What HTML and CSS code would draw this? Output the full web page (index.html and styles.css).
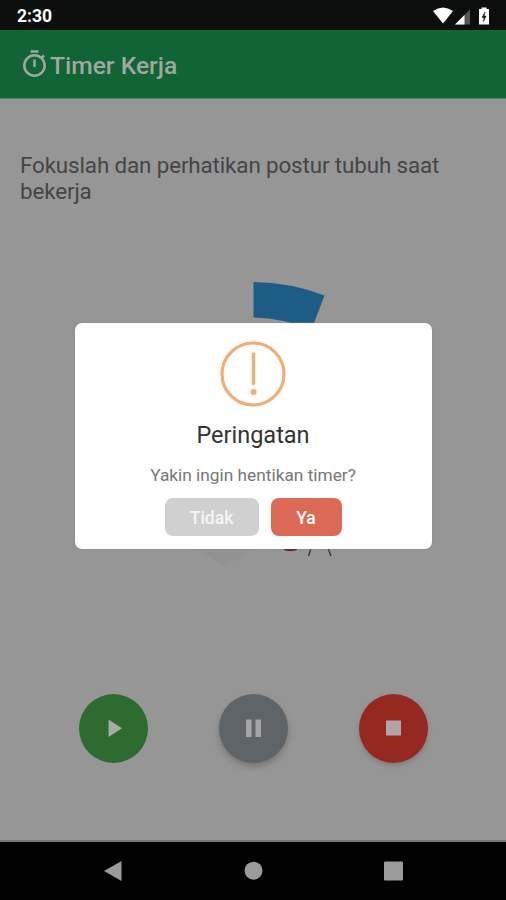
FILE: index.html
```html
<!DOCTYPE html>
<html lang="id">
<head>
<meta charset="utf-8">
<title>Timer Kerja</title>
<link rel="stylesheet" href="styles.css">
</head>
<body>
<div class="phone">
  <div class="status">
    <span class="clock">2:30</span>
    <svg class="status-icons" width="60" height="22" viewBox="0 0 60 22">
      <path d="M1 5Q11 -2 21 5L11 17.500Z" fill="#fff"/>
      <path d="M23 18.500L38 3.500V18.500Z" fill="#555"/>
      <path d="M23 18.500L32.500 9V18.500Z" fill="#fff"/>
      <path d="M47 3H49.500V1.500H54.500V3H57V18.500H47Z" fill="#fff"/>
      <path d="M53 6L50 11.500H52L51.500 15.500L54 10H52Z" fill="#111" stroke="#111" stroke-width=".5"/>
    </svg>
  </div>
  <header class="appbar">
    <svg class="stopwatch" width="26" height="30" viewBox="0 0 26 30" fill="none" stroke="#a0a79f" stroke-width="2.500">
      <circle cx="12.500" cy="16.500" r="10.200"/>
      <path d="M8.500 2.500H16.500M12.500 10.500V18M19.500 9L22 6.500"/>
    </svg>
    <h1>Timer Kerja</h1>
  </header>
  <main class="page">
    <p class="advice">Fokuslah dan perhatikan postur tubuh saat bekerja</p>
    <div class="timer">
      <svg class="chart" width="410" height="410" viewBox="0 0 410 410">
        <path d="M205.500 0A205 205 0 0 1 276.500 13.500L263.500 47.500A170 170 0 0 0 205.500 35.500Z" fill="#1d5c84"/>
        <path d="M146 266H206L177 285Z" fill="#929292"/>
        <path d="M236 265H249V268Q242 270 236 268Z" fill="#571019"/>
        <path d="M263 266L260.500 274M280 266L283 274" stroke="#333" stroke-width="1.300"/>
      </svg>
      <section class="dialog">
        <svg class="warning" width="66" height="66" viewBox="0 0 66 66" fill="none" stroke="#f1ae74" stroke-width="3.200">
          <circle cx="33" cy="33" r="31"/>
          <path d="M33.500 13V42.500" stroke-width="3.500" stroke-linecap="round"/>
          <circle cx="33.500" cy="51" r="3" fill="#f1ae74" stroke="none"/>
        </svg>
        <h2>Peringatan</h2>
        <p>Yakin ingin hentikan timer?</p>
        <div class="actions">
          <button class="no">Tidak</button>
          <button class="yes">Ya</button>
        </div>
      </section>
    </div>
    <div class="controls">
      <button class="round play"><svg width="30" height="30"><path d="M9.500 5.500L23 14.200L9.500 23Z" fill="#a5aca5"/></svg></button>
      <button class="round pause"><svg width="30" height="30"><path d="M7 5.500H12.500V23H7ZM16.500 5.500H22V23H16.500Z" fill="#a3a5a7"/></svg></button>
      <button class="round stop"><svg width="30" height="30"><path d="M7 6.500H22V21.500H7Z" fill="#b0a5a4"/></svg></button>
    </div>
  </main>
  <nav class="system">
    <svg width="24" height="24"><path d="M3 12L20.500 2V22Z" fill="#9b9b9b"/></svg>
    <svg width="24" height="24"><circle cx="12.500" cy="11.700" r="9" fill="#9b9b9b"/></svg>
    <svg width="24" height="24"><rect x="3" y="2.500" width="19" height="19" rx="1" fill="#9b9b9b"/></svg>
  </nav>
</div>
</body>
</html>
```
FILE: styles.css
```css
* { box-sizing: border-box; }
body { margin: 0; font-family: Roboto, sans-serif; background: #969696; }
h1, h2, p { margin: 0; }
button { border: 0; padding: 0; font: inherit; }
svg { display: block; }
.phone { width: 506px; height: 900px; display: flex; flex-direction: column; overflow: hidden; }
.status { height: 30px; background: #0d0f0e; display: flex; justify-content: space-between; align-items: center; padding: 3px 14px 0 17px; }
.clock { color: #fff; font-size: 17.500px; font-weight: 700; margin-top: -2px; }
.appbar { height: 69px; background: #116436; border-bottom: 1px solid #4f7e61; display: flex; align-items: center; padding: 0 22px; }
.stopwatch { margin: -1px 2px 0 0; }
h1 { color: #a0a79f; font-size: 24.600px; font-weight: 500; line-height: 30px; margin-top: 3px; white-space: nowrap; }
.page { height: 743px; background: #969696; border-bottom: 2px solid #777; display: flex; flex-direction: column; }
.advice { padding: 53px 20px 0; height: 183px; color: #454545; font-size: 22.400px; line-height: 26px; letter-spacing: -.13px; }
.timer { height: 410px; display: grid; justify-content: center; justify-items: center; }
.chart, .dialog { grid-area: 1 / 1; }
.dialog { z-index: 1; width: 357px; height: 226px; margin-top: 40.500px; background: #fff; border-radius: 7px; display: flex; flex-direction: column; align-items: center; padding-top: 18.500px; box-shadow: 0 0 2px #888; }
h2 { margin-top: 13px; color: #333; font-size: 23.500px; font-weight: 400; line-height: 30px; }
.dialog p { margin-top: 14px; color: #777; font-size: 17.300px; line-height: 22px; }
.actions { display: flex; gap: 12px; margin-top: 12px; }
.actions button { height: 38px; border-radius: 8px; color: #fff; font-size: 17.500px; font-weight: 500; padding-top: 2px; }
.actions .no { width: 94px; background: #d0d0d0; color: #f6f6f6; }
.yes { width: 71px; background: #dc6953; }
.controls { display: flex; justify-content: space-between; padding: 0 78px 0 79px; margin-top: 2px; }
.round { width: 69px; height: 69px; border-radius: 50%; display: grid; place-items: center; }
.play { background: #2d6b30; }
.pause { background: #5f6468; box-shadow: 0 4px 6px #777; }
.stop { background: #962822; box-shadow: 0 3px 5px #7f7f7f; }
.system { height: 58px; background: #000; display: flex; justify-content: space-between; padding: 17px 101px 0; }
```
